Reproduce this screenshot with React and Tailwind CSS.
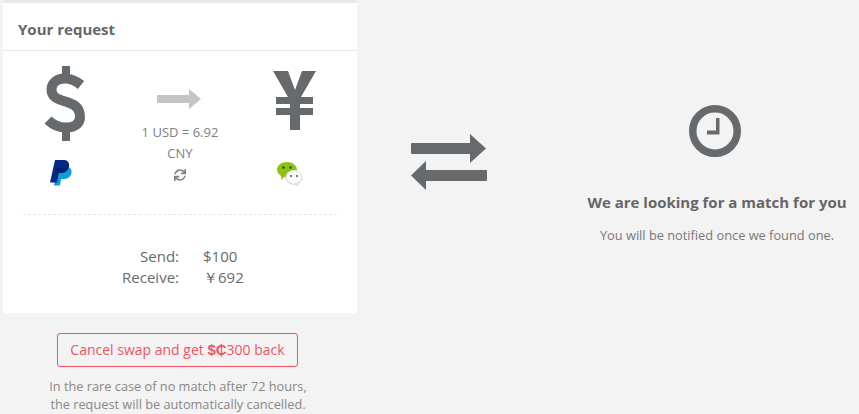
import { FaSync } from 'react-icons/fa'

function DollarIcon() {
  return (
    <svg width="40" height="75" viewBox="45 66 40 75" className="block">
      <path d="M62 66h8v14h-8zM62 126h8v15h-8z" fill="#676a6c" />
      <path d="M81 85C76 81 71 78.500 65 78.500C57 78.500 51.500 83 51.500 89.500C51.500 106 80 96 80 117C80 124 74 127.500 66 127.500C59 127.500 53 125 48 120" fill="none" stroke="#676a6c" strokeWidth="10" />
    </svg>
  )
}

function YenIcon() {
  return (
    <svg width="43" height="59" viewBox="273 71 43 59" className="block">
      <path d="M273 71h15l7 19 7-19h14l-15 26h12v7h-13v4h13v7h-13v15h-10v-15h-14v-7h14v-4h-14v-7h12z" fill="#676a6c" />
    </svg>
  )
}

function GrayArrow() {
  return (
    <svg width="44" height="20" viewBox="0 0 44 20" className="block">
      <path d="M0 6h32V0l12 10-12 10v-6H0z" fill="#c4c4c4" />
    </svg>
  )
}

function PaypalIcon() {
  return (
    <svg width="22" height="26" viewBox="0 0 22 26" className="block">
      <path d="M7 7h9c4 0 6 2 5.500 5.500C21 16.500 18 19 14 19h-3l-1 6.500H4z" fill="#0d9ddb" />
      <path d="M5 0h8c4 0 6.500 2 6 5.500C18.500 10 15.500 13 11 13H8.500L7 22.500H0z" fill="#012b87" />
      <path d="M6.500 8h6c2.500 0 4.500-.5 6.400-2.500C18.500 10 15.500 13 11 13H8.500L7.600 18.500H6z" fill="#001f6b" />
    </svg>
  )
}

function WechatIcon() {
  return (
    <svg width="26" height="25" viewBox="0 0 26 25" className="block">
      <path d="M10 0c5.500 0 10 3.400 10 7.800S15.500 15.500 10 15.500c-1 0-2-.1-3-.4L4 18l.3-4.100C1.700 12.500 0 10.300 0 7.800 0 3.400 4.500 0 10 0z" fill="#8cc313" />
      <circle cx="6.500" cy="5.500" r="1.200" fill="#30400a" />
      <circle cx="13.500" cy="5.500" r="1.200" fill="#30400a" />
      <ellipse cx="17" cy="15.500" rx="8.500" ry="7.500" fill="#dcdcdc" />
      <path d="M18 22l4 2.500-1-4z" fill="#dcdcdc" />
      <ellipse cx="17" cy="15" rx="7.500" ry="6.500" fill="#fbfbfb" />
      <circle cx="14" cy="14" r="1" fill="#555" />
      <circle cx="20" cy="14" r="1" fill="#555" />
    </svg>
  )
}

function ExchangeIcon() {
  return (
    <svg width="76" height="57" viewBox="0 0 76 57" className="block">
      <path d="M1 9h58V0l16 14.500L59 29v-9H1a1 1 0 0 1-1-1v-9a1 1 0 0 1 1-1zM75 36H15v-9L0 41.500 15 56v-9h60a1 1 0 0 0 1-1v-9a1 1 0 0 0-1-1z" fill="#676a6c" />
    </svg>
  )
}

function ClockIcon() {
  return (
    <svg width="52" height="52" viewBox="0 0 52 52" className="block">
      <circle cx="26" cy="26" r="22.250" fill="none" stroke="#676a6c" strokeWidth="7.500" />
      <path d="M27 13h3.500v16.500H18v-4h9z" fill="#676a6c" />
    </svg>
  )
}

export default function App() {
  return (
    <div className="w-[859px] h-[414px] overflow-hidden bg-[#f3f3f3] flex items-start font-['Open_Sans',sans-serif] text-[#676a6c]">
      <div className="w-[354px] ml-[3px] flex-shrink-0">
        <div className="h-[3px] bg-[#e7eaec]" />
        <div className="bg-white h-[310px]">
          <div className="h-[48px] border-b border-[#e7eaec] pl-[15px] pt-[6px] flex items-center">
            <h2 className="text-[15px] font-bold text-[#666]">Your request</h2>
          </div>
          <div className="grid grid-cols-3 pt-[15px] h-[164px] border-b border-dashed border-[#e7e7e7] mx-[20px]">
            <div className="flex flex-col items-center -ml-[16px] w-[115px]">
              <DollarIcon />
              <div className="mt-[19px] mr-[8px]"><PaypalIcon /></div>
            </div>
            <div className="flex flex-col items-center">
              <div className="mt-[23px] mr-[2px]"><GrayArrow /></div>
              <p className="mt-[13px] text-[13px] leading-[21px] text-[#808080] text-center w-[90px]">1 USD = 6.92 CNY</p>
              <FaSync size={12} className="text-[#808080] mt-[5px]" />
            </div>
            <div className="flex flex-col items-center -mr-[16px] w-[115px] justify-self-end">
              <div className="mt-[5px] mr-[1px]"><YenIcon /></div>
              <div className="mt-[32px] mr-[10px]"><WechatIcon /></div>
            </div>
          </div>
          <div className="pt-[31px] grid grid-cols-[176px_1fr] gap-x-[24px] text-[15px] leading-[21px]">
            <span className="text-right">Send:</span>
            <span>$100</span>
            <span className="text-right">Receive:</span>
            <span>￥692</span>
          </div>
        </div>
        <div className="flex flex-col items-center">
          <button className="mt-[20px] h-[34px] w-[241px] border border-[#ef5566] rounded-[3px] text-[14px] text-[#ef5566] mr-[5px]">
            Cancel swap and get <b className="font-['Liberation_Sans',sans-serif] text-[15px]">$₵</b>300 back
          </button>
          <p className="mt-[10px] text-[12.750px] leading-[18px] text-[#888] text-center mr-[4px]">
            In the rare case of no match after 72 hours,<br />the request will be automatically cancelled.
          </p>
        </div>
      </div>
      <div className="ml-[54px] mt-[134px] flex-shrink-0"><ExchangeIcon /></div>
      <div className="ml-[100px] w-[260px] pt-[105px] flex flex-col items-center text-center">
        <div className="mr-[4px]"><ClockIcon /></div>
        <h3 className="mt-[35px] text-[15px] font-bold text-[#666] leading-[20px] whitespace-nowrap">We are looking for a match for you</h3>
        <p className="mt-[14px] text-[12.800px] leading-[18px] text-[#777]">You will be notified once we found one.</p>
      </div>
    </div>
  )
}
